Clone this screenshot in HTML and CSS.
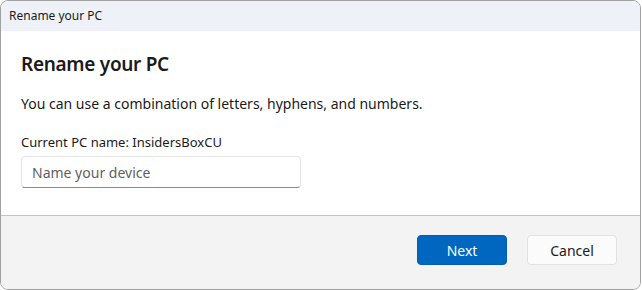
FILE: index.html
```html
<!DOCTYPE html>
<html lang="en">
<head>
    <meta charset="UTF-8">
    <title>Rename your PC</title>
    <link rel="stylesheet" href="styles.css">
</head>
<body>
    <div class="window">
        <div class="titlebar">Rename your PC</div>
        <div class="content">
            <h1>Rename your PC</h1>
            <p class="hint">You can use a combination of letters, hyphens, and numbers.</p>
            <p class="current">Current PC name: InsidersBoxCU</p>
            <input class="name-input" type="text" placeholder="Name your device">
        </div>
        <div class="footer">
            <button class="btn btn-primary">Next</button>
            <button class="btn btn-secondary">Cancel</button>
        </div>
    </div>
</body>
</html>
```

FILE: styles.css
```css
body {
    margin: 0;
    padding: 0;
    background: #ffffff;
    font-family: "Noto Sans", "Open Sans", sans-serif;
    color: #1a1a1a;
}
.window {
    width: 639px;
    height: 288px;
    border: 1px solid #a0a0a0;
    border-radius: 8px;
    overflow: hidden;
    display: flex;
    flex-direction: column;
    background: #fff;
}
.titlebar {
    height: 30px;
    line-height: 30px;
    padding-left: 8px;
    font-size: 12px;
    background: #eef2f8;
    color: #1a1a1a;
}
.content {
    flex: 1;
    padding: 19px 20px 0 20px;
    border-bottom: 1px solid #c4c4c4;
}
.content h1 {
    margin: 0;
    font-size: 19px;
    font-weight: 600;
    letter-spacing: -0.3px;
    line-height: 28px;
}
.hint {
    margin: 16px 0 0 0;
    font-size: 14px;
    line-height: 20px;
}
.current {
    margin: 18px 0 0 0;
    font-size: 13px;
    line-height: 20px;
}
.name-input {
    display: block;
    box-sizing: border-box;
    margin: 4px 0 0 0;
    width: 280px;
    height: 32px;
    padding: 0 10px;
    font-family: inherit;
    font-size: 14px;
    border: 1px solid #e5e5e5;
    border-bottom-color: #8a8a8a;
    border-radius: 4px;
    background: #fff;
    outline: none;
}
.name-input::placeholder {
    color: #5f5f5f;
}
.footer {
    height: 73px;
    background: #f3f3f3;
    display: flex;
    justify-content: flex-end;
    align-items: flex-start;
    gap: 20px;
    padding: 19px 23px 0 0;
    box-sizing: border-box;
}
.btn {
    width: 90px;
    height: 30px;
    border-radius: 4px;
    font-family: inherit;
    font-size: 14px;
}
.btn-primary {
    background: #0067c0;
    color: #fff;
    border: 1px solid #005fb5;
}
.btn-secondary {
    background: #fbfbfb;
    color: #1a1a1a;
    border: 1px solid #e3e3e3;
}
```
